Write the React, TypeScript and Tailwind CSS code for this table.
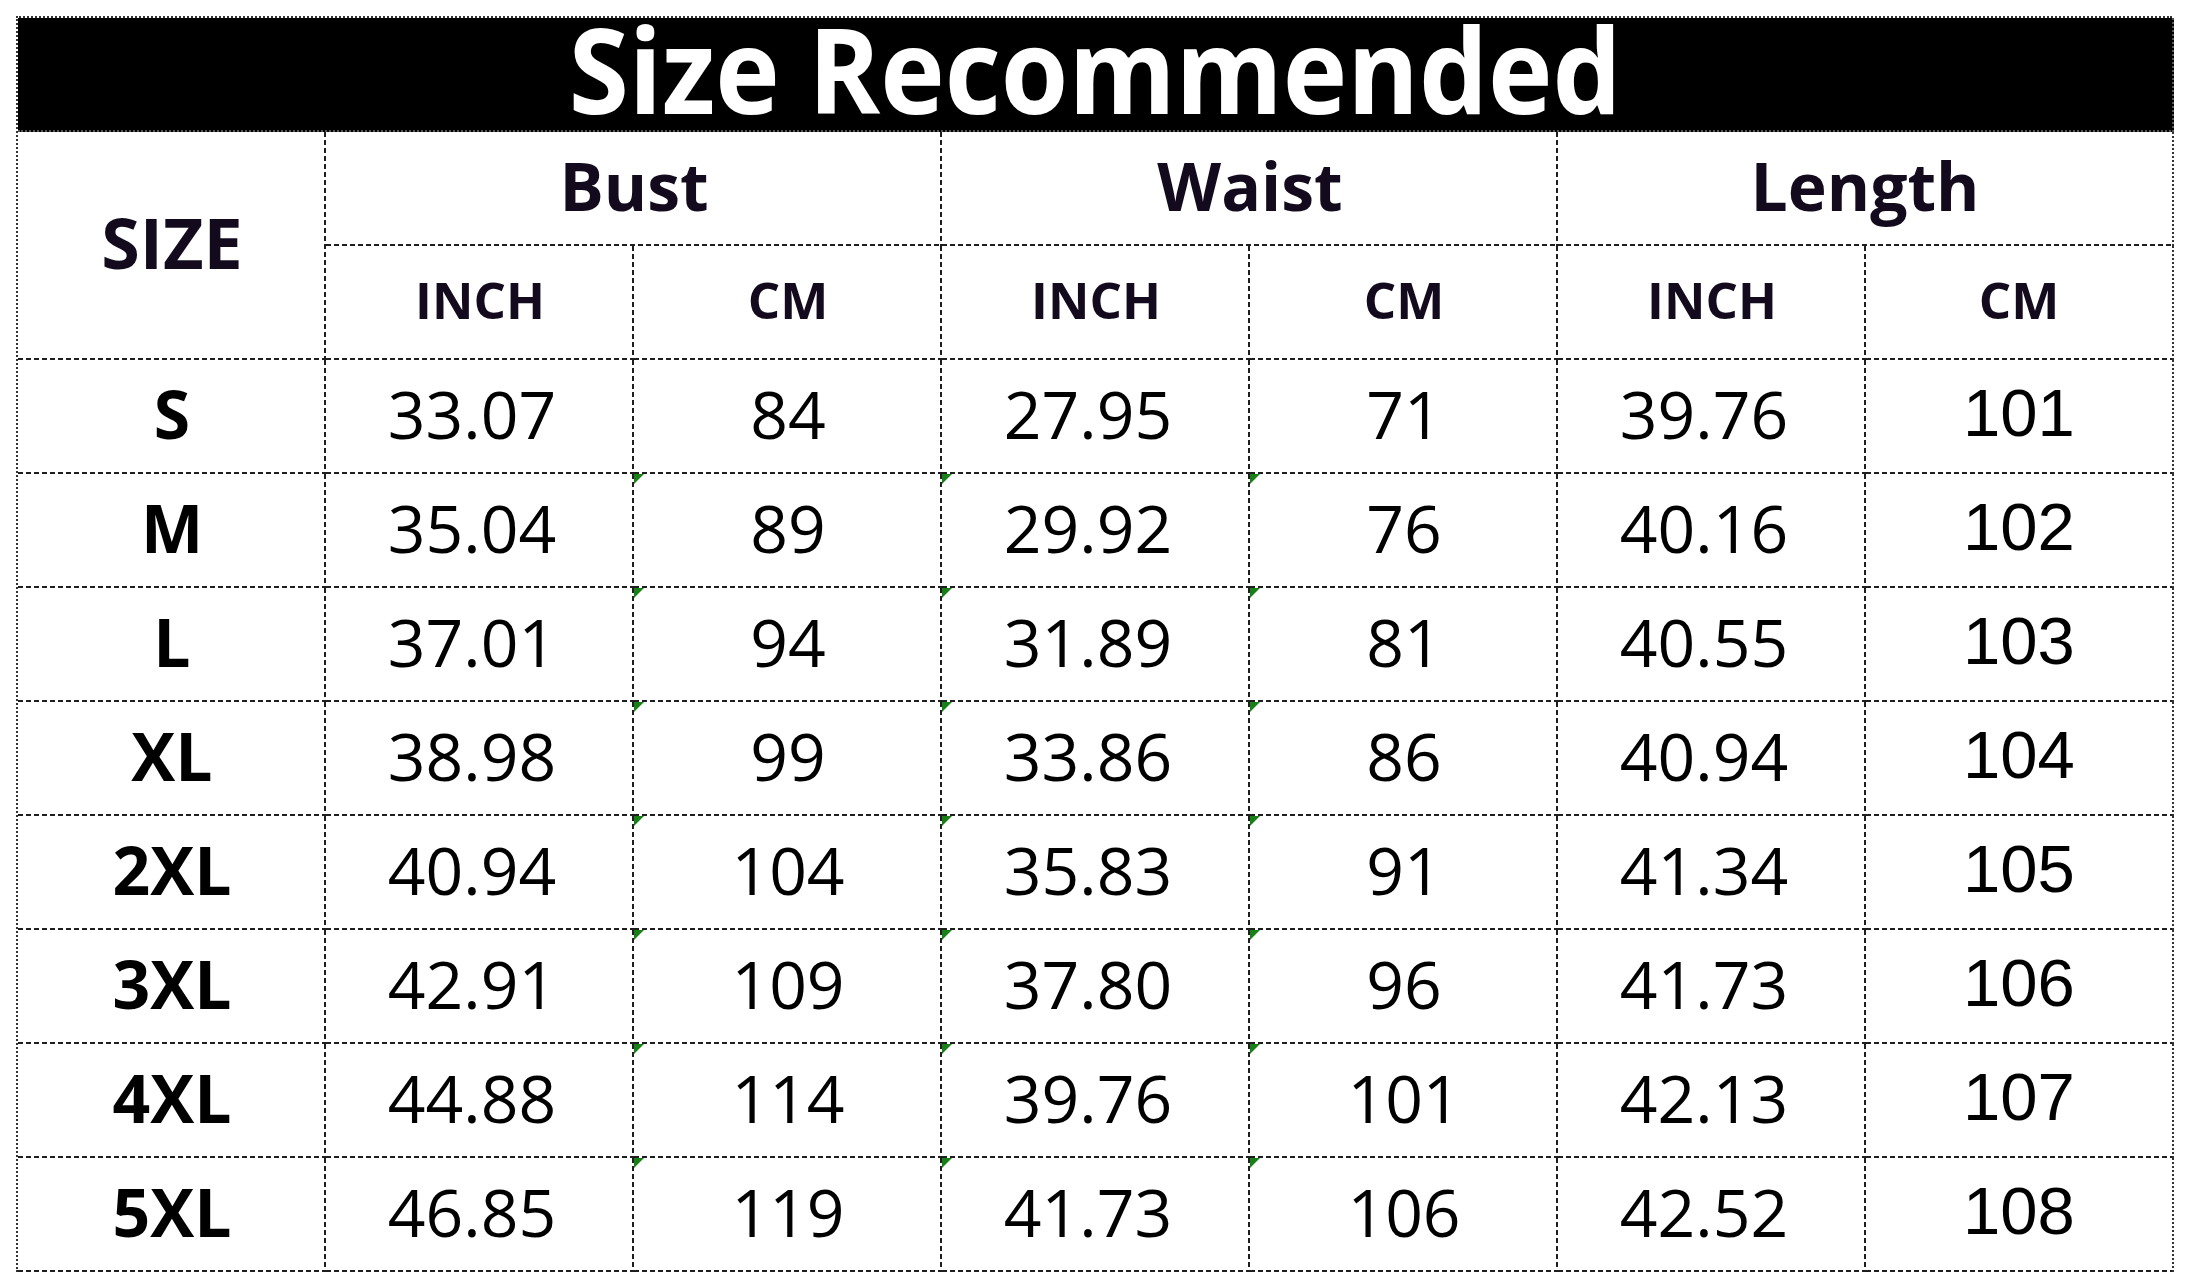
import React from "react";

const rows = [
  { size: "S", v: ["33.07", "84", "27.95", "71", "39.76", "101"] },
  { size: "M", v: ["35.04", "89", "29.92", "76", "40.16", "102"] },
  { size: "L", v: ["37.01", "94", "31.89", "81", "40.55", "103"] },
  { size: "XL", v: ["38.98", "99", "33.86", "86", "40.94", "104"] },
  { size: "2XL", v: ["40.94", "104", "35.83", "91", "41.34", "105"] },
  { size: "3XL", v: ["42.91", "109", "37.80", "96", "41.73", "106"] },
  { size: "4XL", v: ["44.88", "114", "39.76", "101", "42.13", "107"] },
  { size: "5XL", v: ["46.85", "119", "41.73", "106", "42.52", "108"] },
];

// dashed cell edges (right + bottom), drawn like the spreadsheet grid
const cell =
  "pb-2 bg-no-repeat [background-image:repeating-linear-gradient(90deg,#1e1e1e_0_5px,transparent_5px_8px),repeating-linear-gradient(180deg,#1e1e1e_0_5px,transparent_5px_8px)] [background-size:100%_2px,2px_100%] [background-position:left_bottom,right_top]";
// last column: only the bottom dashes, right side is the dotted outline
const lastCell =
  "pb-2 bg-no-repeat [background-image:repeating-linear-gradient(90deg,#1e1e1e_0_5px,transparent_5px_8px)] [background-size:100%_2px] [background-position:left_bottom] border-r-2 border-dotted border-[#333]";

function Flag() {
  // excel "number stored as text" marker
  return (
    <svg className="absolute left-0 top-0" width="10" height="10" viewBox="0 0 10 10">
      <polygon points="0,0 10,0 0,10" fill="#178017" />
    </svg>
  );
}

export default function App() {
  return (
    <div className="w-[2188px] h-[1286px] bg-white pl-4 pt-4 font-['Open_Sans',sans-serif]">
      <div className="grid w-[2156px] grid-cols-[repeat(7,308px)] grid-rows-[repeat(11,114px)] border-l-2 border-t-2 border-dotted border-[#333]">
        {/* title bar */}
        <div className="col-span-7 flex items-center justify-center bg-black border-r-2 border-b-2 border-dotted border-[#555]">
          <span className="inline-block whitespace-nowrap text-[118px] font-bold leading-[96px] text-white scale-x-[0.925] mb-[10px]">
            Size Recommended
          </span>
        </div>

        <div className={`row-span-2 flex items-center justify-center ${cell} text-[70px] font-bold text-[#130b1d]`}>
          SIZE
        </div>
        {["Bust", "Waist", "Length"].map((h, i) => (
          <div
            key={h}
            className={`col-span-2 flex items-center justify-center text-[66px] font-bold text-[#130b1d] ${i === 2 ? lastCell : cell}`}
          >
            {h}
          </div>
        ))}
        {[0, 1, 2, 3, 4, 5].map((i) => (
          <div
            key={i}
            className={`flex items-center justify-center text-[51px] font-bold text-[#130b1d] ${i === 5 ? lastCell : cell}`}
          >
            {i % 2 === 0 ? "INCH" : "CM"}
          </div>
        ))}

        {rows.map((r, ri) => (
          <React.Fragment key={r.size}>
            <div className={`flex items-center justify-center ${cell} text-[66px] font-bold text-black`}>
              {r.size}
            </div>
            {r.v.map((val, ci) => (
              <div
                key={ci}
                className={`relative flex items-center justify-center text-black ${
                  ci === 5
                    ? `${lastCell} font-['Liberation_Sans',sans-serif] text-[67px]`
                    : `${cell} text-[66px]`
                } ${ci % 2 === 0 ? "pr-4" : ""}`}
              >
                {ri > 0 && ci >= 1 && ci <= 3 && <Flag />}
                {val}
              </div>
            ))}
          </React.Fragment>
        ))}
      </div>
    </div>
  );
}
